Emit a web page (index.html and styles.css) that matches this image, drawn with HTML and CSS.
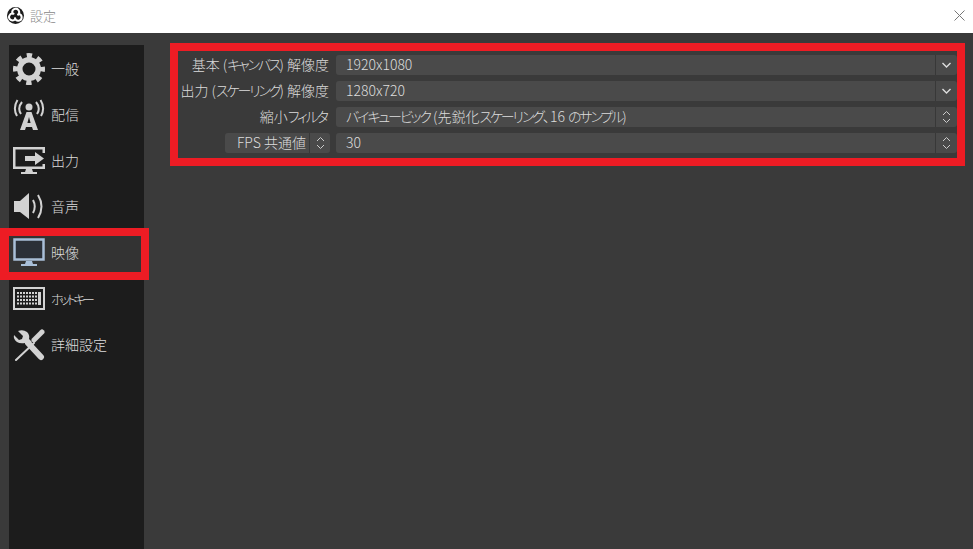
FILE: index.html
```html
<!DOCTYPE html>
<html lang="ja">
<head>
<meta charset="utf-8">
<title>設定</title>
<link rel="stylesheet" href="styles.css">
</head>
<body>
<header class="titlebar">
  <svg class="logo" viewBox="0 0 20 20" width="17" height="17">
    <circle cx="10" cy="10" r="10" fill="#1c1c1c"/>
    <g fill="none" stroke="#fff" stroke-width="2.400" stroke-linecap="round">
      <path d="M6.500 7.500A4 4 0 1 1 13 9"/>
      <path d="M6.500 7.500A4 4 0 1 1 13 9" transform="rotate(120 10 10)"/>
      <path d="M6.500 7.500A4 4 0 1 1 13 9" transform="rotate(240 10 10)"/>
    </g>
  </svg>
  <span class="title">設定</span>
  <svg class="close" viewBox="0 0 11 11" width="11" height="11"><path d="M.5.5l10 10M10.500.5l-10 10" stroke="#777" stroke-width="1" fill="none"/></svg>
</header>
<div class="body">
  <nav class="sidebar">
    <div class="item">
      <svg class="icon" viewBox="0 0 32 32" width="32" height="32"><circle cx="16" cy="16" r="9.250" fill="none" stroke="#d2d2d2" stroke-width="5.500"/><circle cx="16" cy="16" r="13.500" fill="none" stroke="#d2d2d2" stroke-width="5" stroke-dasharray="5.300 5.300" stroke-dashoffset="2.650"/></svg>
      <span>一般</span>
    </div>
    <div class="item">
      <svg class="icon" viewBox="0 0 32 32" width="32" height="32"><g fill="none" stroke="#d2d2d2" stroke-width="2"><path d="M8 2Q3 8 7 14M3.500 0Q-1.500 8 3 16" transform="translate(1 1)"/><path d="M24 2Q29 8 25 14M28.500 0Q33.500 8 29 16" transform="translate(-1 1)"/></g><circle cx="16" cy="8" r="3.500" fill="#d2d2d2"/><path fill="#d2d2d2" fill-rule="evenodd" d="M13.500 13h5L25 31h-5l-1-3h-6l-1 3H7Zm2.500 5-1.600 6h3.200Z"/></svg>
      <span>配信</span>
    </div>
    <div class="item">
      <svg class="icon" viewBox="0 0 32 32" width="32" height="32"><path fill="#d2d2d2" d="M0 2h32v6h-2.500V4.500h-27v17h27V19H32v5H19l1 3h4v2H8v-2h4l1-3H0Z"/><path fill="#d2d2d2" d="M12 11h10V7l9 6.500-9 6.500v-4H12Z"/></svg>
      <span>出力</span>
    </div>
    <div class="item">
      <svg class="icon" viewBox="0 0 32 32" width="32" height="32"><path fill="#d2d2d2" d="M1 10h6l9-8v26l-9-7H1Z"/><path fill="none" stroke="#d2d2d2" stroke-width="2" d="M20 9q3.500 6.500 0 13M25 4q7 11.500 0 23"/></svg>
      <span>音声</span>
    </div>
    <div class="item selected">
      <svg class="icon" viewBox="0 0 32 32" width="32" height="32"><path fill="#2b3038" stroke="#a9bfd8" stroke-width="2.500" d="M1.500 2.500h29v20h-29Z"/><path fill="#a9bfd8" d="M13 24h6l1 3h4v2H8v-2h4Z"/></svg>
      <span>映像</span>
    </div>
    <div class="item">
      <svg class="icon" viewBox="0 0 32 32" width="32" height="32"><path fill="none" stroke="#d2d2d2" stroke-width="2" d="M1 5h30v21H1Z"/><path stroke="#d2d2d2" stroke-width="2" stroke-dasharray="2 1" fill="none" d="M4 10h21M4 13.500h21M4 17h21M4 20.500h21"/><path fill="#d2d2d2" d="M25 9h3v13h-3Z"/></svg>
      <span class="hotkey">ホットキー</span>
    </div>
    <div class="item">
      <svg class="icon" viewBox="0 0 32 32" width="32" height="32"><g stroke="#d2d2d2" fill="none" stroke-linecap="round"><path stroke-width="2" d="M21 14 3 31"/><path stroke-width="5" d="M21 11 29 3"/><path stroke-width="6" d="M15 14 28 28"/></g><path fill="#d2d2d2" d="M1 6l5 5 3-1 1-3-5-5q5-2 9 1 3 3 2 7l3 3-4 4-3-3q-5 1-8-1-4-3-3-7Z"/></svg>
      <span>詳細設定</span>
    </div>
  </nav>
  <main class="form">
    <div class="label"><span>基本 (<span class="kana">キャンバス</span>) 解像度</span></div>
    <div class="combo"><span class="value">1920x1080</span><span class="arrow"><svg viewBox="0 0 9 6" width="9" height="6"><path d="M.5 1l4 4 4-4" fill="none" stroke="#ddd" stroke-width="1.400"/></svg></span></div>
    <div class="label"><span>出力 (<span class="kana">スケーリング</span>) 解像度</span></div>
    <div class="combo"><span class="value">1280x720</span><span class="arrow"><svg viewBox="0 0 9 6" width="9" height="6"><path d="M.5 1l4 4 4-4" fill="none" stroke="#ddd" stroke-width="1.400"/></svg></span></div>
    <div class="label"><span>縮小<span class="kana">フィル</span>タ</span></div>
    <div class="combo"><span class="value"><span class="kana">バイキュービック</span> (先鋭化<span class="kana">スケーリング</span>、16 <span class="kana">のサンプル</span>)</span><span class="arrow"><svg viewBox="0 0 9 14" width="9" height="14"><path d="M1 5l3.500-3.500L8 5M1 9l3.500 3.500L8 9" fill="none" stroke="#ccc" stroke-width="1"/></svg></span></div>
    <div class="label">
      <div class="fps"><span class="fps-text">FPS 共通値</span><span class="fps-arrow"><svg viewBox="0 0 9 14" width="9" height="14"><path d="M1 5l3.500-3.500L8 5M1 9l3.500 3.500L8 9" fill="none" stroke="#ccc" stroke-width="1"/></svg></span></div>
    </div>
    <div class="combo"><span class="value">30</span><span class="arrow"><svg viewBox="0 0 9 14" width="9" height="14"><path d="M1 5l3.500-3.500L8 5M1 9l3.500 3.500L8 9" fill="none" stroke="#ccc" stroke-width="1"/></svg></span></div>
  </main>
</div>
<div class="mark mark-form"></div>
<div class="mark mark-nav"></div>
</body>
</html>
```
FILE: styles.css
```css
* { box-sizing: border-box; }
html, body { margin: 0; height: 100%; }
body {
  width: 973px;
  height: 549px;
  overflow: hidden;
  position: relative;
  display: flex;
  flex-direction: column;
  background: #3a3a3a;
  color: #d0d0d0;
  font-family: "Noto Sans CJK JP", "Noto Sans", sans-serif;
  font-size: 14px;
  font-weight: 300;
  font-feature-settings: "palt";
}
.titlebar {
  height: 33px;
  flex: none;
  background: #fff;
  display: flex;
  align-items: center;
  padding: 0 8px 0 7px;
  gap: 6px;
}
.logo { flex: none; margin-top: -3px; }
.title { color: #888; font-size: 13px; margin-top: -3px; font-feature-settings: normal; }
.close { margin-left: auto; margin-top: -3px; }
.body { flex: 1; display: flex; padding: 12px 16px 0 9px; min-height: 0; }
.sidebar {
  width: 135px;
  flex: none;
  background: #1c1c1c;
  padding-top: 1px;
}
.item {
  height: 46px;
  display: flex;
  align-items: center;
  padding-left: 4px;
  gap: 6px;
}
.item span { color: #dcdcdc; margin-top: -2px; }
.item .hotkey { letter-spacing: -3.500px; font-size: 13px; }
.item.selected { background: #333; }
.icon { flex: none; }
.kana { letter-spacing: -2.100px; }
.form {
  flex: 1;
  display: grid;
  grid-template-columns: 149px 1fr;
  column-gap: 7px;
  row-gap: 6px;
  grid-auto-rows: 20px;
  align-content: start;
  padding: 10px 0 0 36px;
}
.label {
  display: flex;
  align-items: center;
  justify-content: flex-end;
  white-space: nowrap;
  line-height: 18px;
  color: #dcdcdc;
  padding-bottom: 2px;
}
.combo {
  display: flex;
  align-items: stretch;
  background: #4a4a4a;
  border-radius: 3px;
  height: 20px;
}
.value {
  flex: 1;
  padding-left: 10px;
  line-height: 18px;
  color: #dcdcdc;
  white-space: nowrap;
}
.arrow {
  width: 22px;
  flex: none;
  border-left: 1px solid #383838;
  display: flex;
  align-items: center;
  justify-content: center;
}
.fps {
  width: 105px;
  height: 20px;
  display: flex;
  background: #4a4a4a;
  border-radius: 3px;
  margin-right: -1px;
  margin-bottom: -2px;
}
.fps-text { flex: 1; text-align: right; padding-right: 3px; line-height: 18px; }
.fps-arrow {
  width: 21px;
  flex: none;
  border-left: 1px solid #383838;
  display: flex;
  align-items: center;
  justify-content: center;
}
.mark { position: absolute; border-style: solid; border-color: #ed1c24; pointer-events: none; }
.mark-form { left: 170px; top: 43px; width: 795px; height: 123px; border-width: 8px; }
.mark-nav { left: 0; top: 228px; width: 149px; height: 52px; border-width: 8px 8px 8px 9px; }
```
